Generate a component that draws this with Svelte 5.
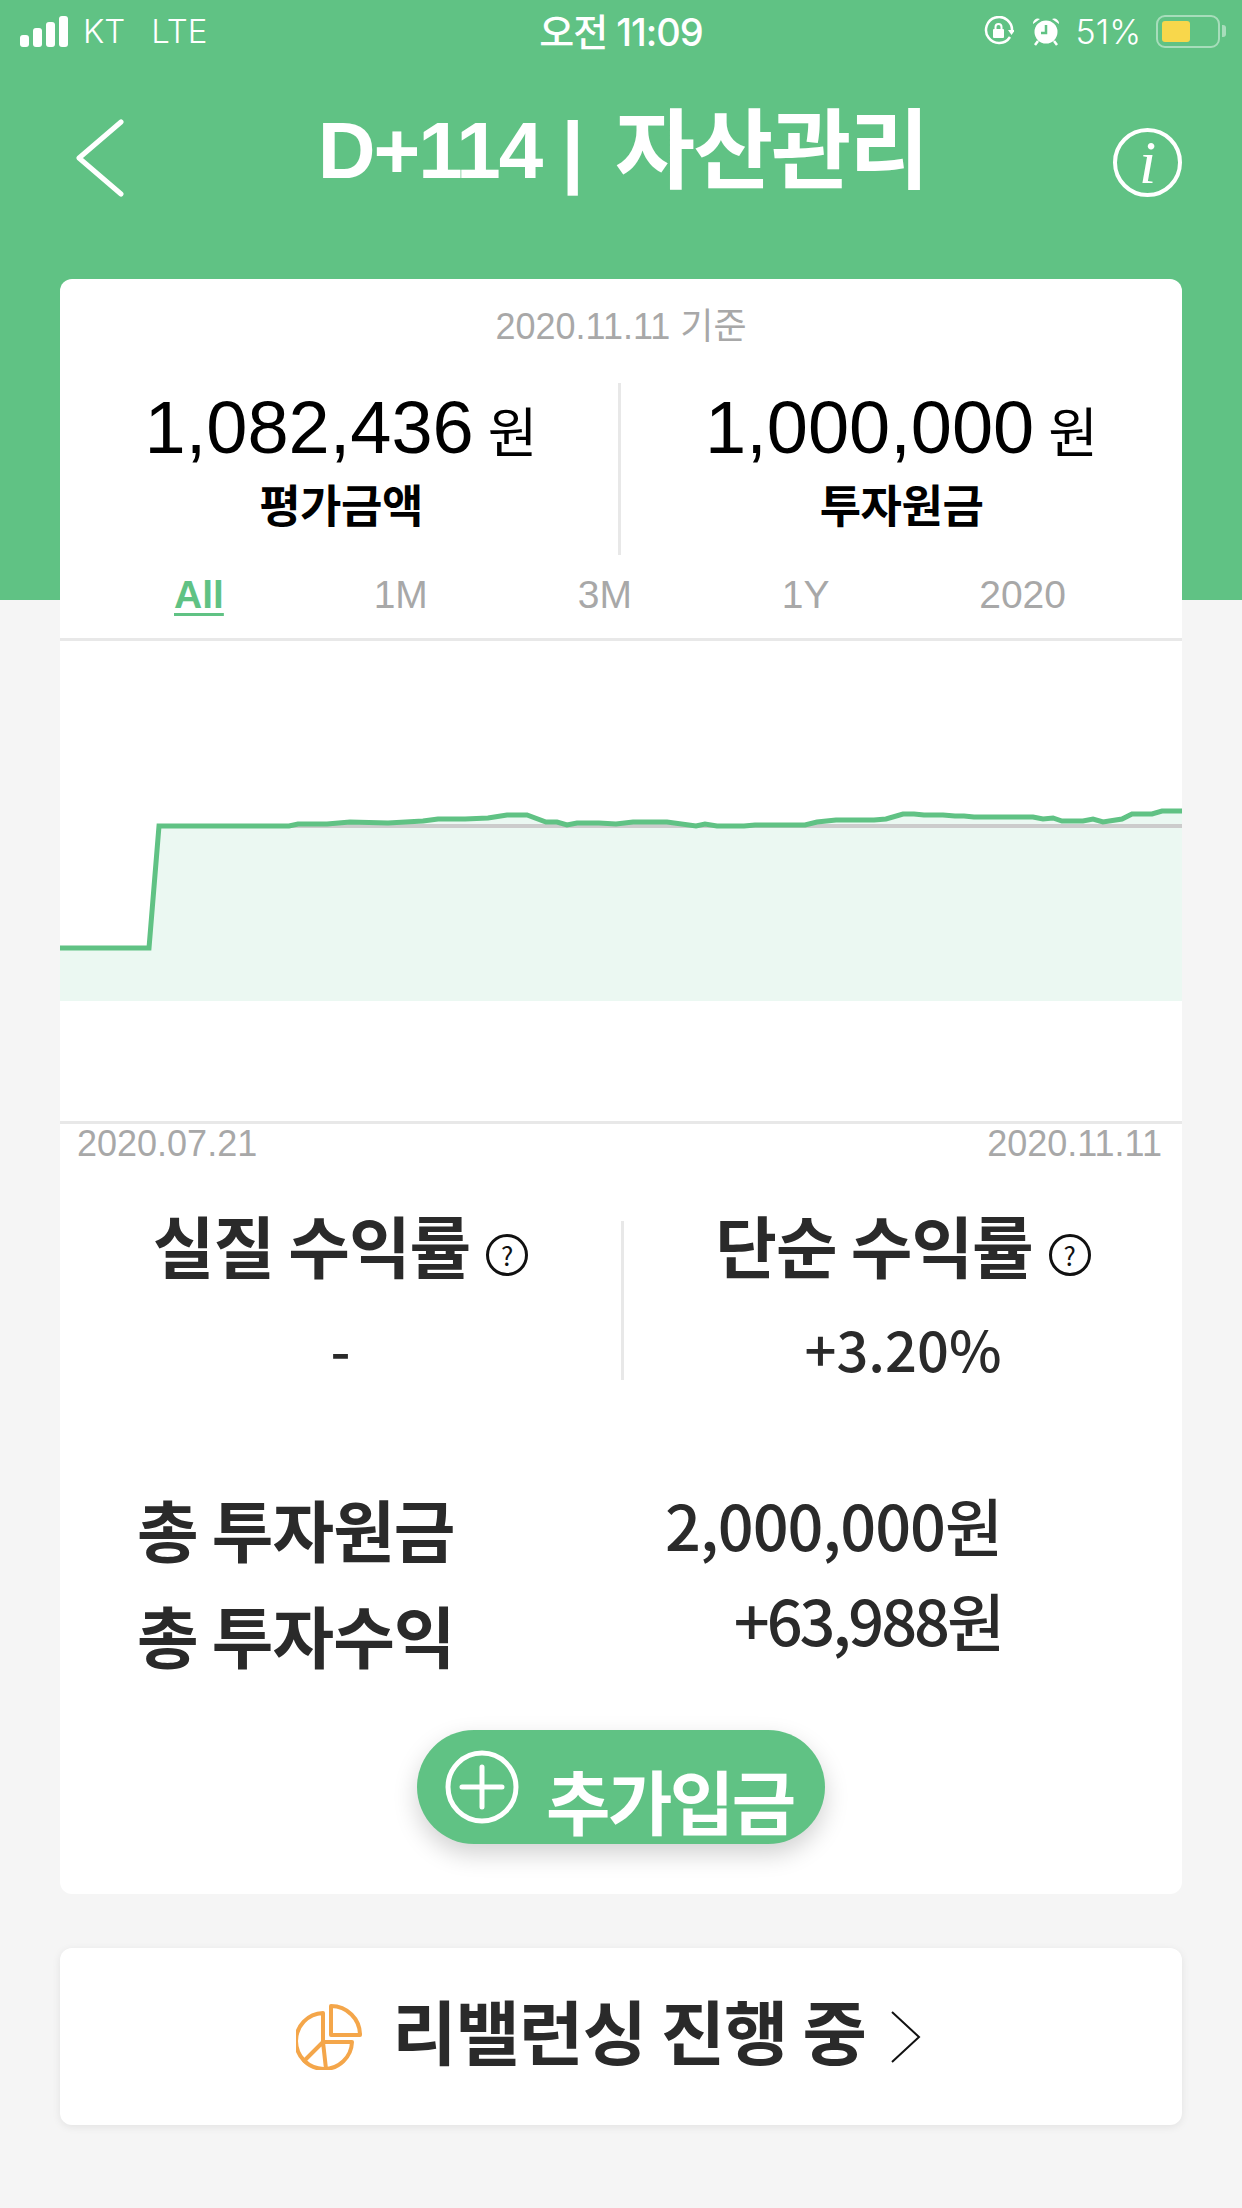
<script>
    const tabs = ["All", "1M", "3M", "1Y", "2020"];

    // chart points, px inside the 1122x480 chart box
    const points = [
        [0, 308], [89, 308], [99, 186], [229, 186], [238, 184], [267, 184], [290, 182], [328, 183],
        [363, 181], [378, 179], [405, 179], [428, 178], [447, 175], [467, 175], [486, 182], [497, 182],
        [507, 185], [517, 183], [539, 183], [556, 184], [573, 182], [607, 182], [636, 186], [645, 184],
        [657, 186], [684, 186], [695, 185], [745, 185], [757, 182], [776, 180], [814, 180], [826, 179],
        [843, 174], [854, 174], [864, 175], [883, 175], [895, 176], [904, 176], [914, 177], [973, 177],
        [983, 179], [993, 178], [1002, 181], [1023, 181], [1033, 179], [1043, 182], [1062, 179], [1072, 174],
        [1092, 174], [1102, 171], [1122, 171],
    ];
    const line = points.map((p) => p.join(",")).join(" ");
    const area = `0,361 ${line} 1122,361`;
</script>

<div class="page">
    <header class="top">
        <div class="status">
            <div class="status-left">
                <div class="signal">
                    <i style="height: 12px"></i>
                    <i style="height: 19px"></i>
                    <i style="height: 25px"></i>
                    <i style="height: 31px"></i>
                </div>
                <span class="carrier">KT</span>
                <span class="carrier">LTE</span>
            </div>
            <div class="clock">오전 11:09</div>
            <div class="status-right">
                <svg width="30" height="30" viewBox="0 0 30 30" fill="none" stroke="#fff" stroke-width="2.5">
                    <path d="M26 21A13 13 0 1 1 28 15" />
                    <path d="M24 14h7l-3.500 5z" fill="#fff" stroke="none" />
                    <rect x="9" y="13" width="11" height="9" rx="1" fill="#fff" stroke="none" />
                    <path d="M11.500 13v-2a3 3 0 0 1 6 0v2" stroke-width="2" />
                </svg>
                <svg class="alarm" width="28" height="30" viewBox="0 0 28 30" fill="none">
                    <circle cx="14" cy="16" r="11.500" fill="#fff" />
                    <path d="M14 9v8h-5" stroke="#60c284" stroke-width="2.500" />
                    <path d="M1 8a5 5 0 0 1 7-5zM27 8a5 5 0 0 0-7-5z" fill="#fff" />
                    <path d="M6 25l-3 4M22 25l3 4" stroke="#fff" stroke-width="2.500" />
                </svg>
                <span class="percent">51%</span>
                <div class="battery"><div class="battery-level"></div></div>
                <div class="battery-nub"></div>
            </div>
        </div>
        <nav class="nav">
            <svg class="back" width="48" height="78" viewBox="0 0 48 78" fill="none" stroke="#fff" stroke-width="5" stroke-linecap="round" stroke-linejoin="round">
                <path d="M45 3L3 39L45 75" />
            </svg>
            <h1>D+114 | <span class="title-ko">자산관리</span></h1>
            <div class="info"><span>i</span></div>
        </nav>
    </header>

    <main class="content">
        <section class="card summary-card">
            <div class="as-of">2020.11.11 기준</div>
            <div class="summary">
                <div class="summary-col first">
                    <div class="amount">1,082,436<span class="won">원</span></div>
                    <div class="amount-label">평가금액</div>
                </div>
                <div class="summary-col with-rule">
                    <div class="amount">1,000,000<span class="won">원</span></div>
                    <div class="amount-label">투자원금</div>
                </div>
            </div>
            <div class="tabs">
                {#each tabs as tab, i}
                    <span class="tab" class:active={i === 0}>{tab}</span>
                {/each}
            </div>
            <div class="chart">
                <svg width="1122" height="480" viewBox="0 1 1122 480">
                    <polygon points={area} fill="#ebf8f2" />
                    <rect x="99" y="184" width="1023" height="4" fill="#cccccc" />
                    <polyline points={line} fill="none" stroke="#60c284" stroke-width="5" />
                </svg>
            </div>
            <div class="chart-dates">
                <span>2020.07.21</span>
                <span>2020.11.11</span>
            </div>
            <div class="rates">
                <div class="rate-col">
                    <div class="rate-title">실질 수익률<span class="help">?</span></div>
                    <div class="rate-value">-</div>
                </div>
                <div class="rate-col with-rule">
                    <div class="rate-title">단순 수익률<span class="help">?</span></div>
                    <div class="rate-value">+3.20%</div>
                </div>
            </div>
            <div class="totals">
                <div class="total-labels">
                    <div>총 투자원금</div>
                    <div>총 투자수익</div>
                </div>
                <div class="total-values">
                    <div>2,000,000원</div>
                    <div class="tight">+63,988원</div>
                </div>
            </div>
            <button class="deposit">
                <svg width="74" height="74" viewBox="0 0 74 74" fill="none" stroke="#fff" stroke-width="5" stroke-linecap="round">
                    <circle cx="37" cy="37" r="34" />
                    <path d="M37 17v40M17 37h40" />
                </svg>
                <span>추가입금</span>
            </button>
        </section>

        <section class="card rebalance">
            <svg width="66" height="66" viewBox="0 0 66 66" fill="none" stroke="#f4a64a" stroke-width="4" stroke-linejoin="round">
                <path d="M35 2V31H64A29 29 0 0 0 35 2Z" />
                <path d="M27 9A28 28 0 1 0 56 38H27Z" />
                <path d="M27 38L30 65M27 38L7 58" />
            </svg>
            <span class="rebalance-text">리밸런싱 진행 중</span>
            <svg width="32" height="54" viewBox="0 0 32 54" fill="none" stroke="#111" stroke-width="2">
                <path d="M2 2L29 27L2 52" />
            </svg>
        </section>
    </main>
</div>

<style>
    :global(body) {
        margin: 0;
        background: #f5f5f5;
    }

    .page {
        width: 1242px;
        height: 2208px;
        overflow: hidden;
        background: #f5f5f5;
        font-family: "Noto Sans CJK KR", "Noto Sans", sans-serif;
    }

    .top {
        height: 600px;
        background: #60c284;
        color: #fff;
    }

    .status {
        height: 62px;
        display: grid;
        grid-template-columns: 1fr auto 1fr;
        align-items: center;
        font-family: Inter, "Noto Sans CJK KR", sans-serif;
        font-size: 33px;
    }

    .status-left {
        display: flex;
        align-items: center;
        padding-left: 20px;
    }

    .signal {
        display: flex;
        align-items: flex-end;
        gap: 4px;
        height: 31px;
        margin-right: 15px;
        padding-top: 1px;
    }

    .signal i {
        width: 9px;
        border-radius: 3px;
        background: #fff;
    }

    .carrier {
        margin-right: 26px;
        font-weight: 300;
    }

    .clock {
        margin-top: -3px;
        font-size: 38px;
        font-weight: 500;
        letter-spacing: -1px;
    }

    .status-right {
        display: flex;
        align-items: center;
        justify-content: flex-end;
        padding-right: 16px;
    }

    .alarm {
        margin-left: 18px;
    }

    .percent {
        margin-left: 16px;
        font-weight: 300;
        font-size: 34px;
    }

    .battery {
        box-sizing: border-box;
        width: 64px;
        height: 33px;
        margin-left: 15px;
        padding: 4px;
        border: 2px solid rgba(255, 255, 255, 0.45);
        border-radius: 9px;
    }

    .battery-level {
        width: 28px;
        height: 100%;
        border-radius: 3px;
        background: #f8d74b;
    }

    .battery-nub {
        width: 4px;
        height: 12px;
        margin-left: 2px;
        border-radius: 0 3px 3px 0;
        background: rgba(255, 255, 255, 0.45);
    }

    .nav {
        height: 186px;
        display: flex;
        align-items: center;
        justify-content: space-between;
        padding: 0 60px 0 76px;
    }

    .back {
        margin-top: 5px;
    }

    .nav h1 {
        margin: -22px 0 0 8px;
        font-family: "Liberation Sans", "Noto Sans CJK KR", sans-serif;
        font-size: 80px;
        font-weight: 700;
        letter-spacing: -2px;
        white-space: nowrap;
    }

    .title-ko {
        margin-left: 13px;
        font-size: 87px;
        vertical-align: -4px;
    }

    .info {
        box-sizing: border-box;
        width: 69px;
        height: 69px;
        margin-top: 14px;
        display: flex;
        align-items: center;
        justify-content: center;
        border: 4px solid #fff;
        border-radius: 50%;
        font-family: "Liberation Serif", serif;
        font-style: italic;
        font-size: 62px;
    }

    .content {
        margin-top: -321px;
        padding: 0 60px;
        display: flex;
        flex-direction: column;
        gap: 54px;
    }

    .card {
        background: #fff;
        border-radius: 12px;
    }

    .summary-card {
        height: 1615px;
        display: flex;
        flex-direction: column;
    }

    .as-of {
        height: 92px;
        padding-top: 2px;
        box-sizing: border-box;
        line-height: 92px;
        text-align: center;
        font-family: "Liberation Sans", "Noto Sans CJK KR", sans-serif;
        font-size: 36px;
        color: #a8a8a8;
    }

    .summary {
        display: grid;
        grid-template-columns: 558px 564px;
        height: 172px;
        margin-top: 12px;
    }

    .summary-col {
        text-align: center;
    }

    .summary-col.first {
        padding-left: 4px;
    }

    .with-rule {
        border-left: 3px solid #e8e8e8;
    }

    .amount {
        height: 90px;
        line-height: 90px;
        font-family: "Liberation Sans", "Noto Sans CJK KR", sans-serif;
        font-size: 74px;
        color: #000;
    }

    .won {
        margin-left: 14px;
        font-size: 54px;
        font-family: "Noto Sans CJK KR", sans-serif;
    }

    .amount-label {
        margin-top: 1px;
        line-height: 60px;
        font-size: 45px;
        font-weight: 700;
        letter-spacing: -0.5px;
        color: #000;
    }

    .tabs {
        box-sizing: border-box;
        height: 86px;
        display: flex;
        justify-content: space-between;
        padding: 0 116px 0 114px;
        border-bottom: 3px solid #e8e8e8;
        font-family: "Liberation Sans", sans-serif;
        font-size: 39px;
        line-height: 80px;
        color: #a8a8a8;
    }

    .tab.active {
        font-weight: 700;
        color: #60c284;
        text-decoration: underline;
        text-underline-offset: 5px;
    }

    .chart {
        height: 480px;
        border-bottom: 3px solid #e8e8e8;
    }

    .chart svg {
        display: block;
    }

    .chart-dates {
        display: flex;
        justify-content: space-between;
        padding: 0 20px 0 17px;
        line-height: 40px;
        font-family: "Liberation Sans", sans-serif;
        font-size: 36px;
        color: #a8a8a8;
    }

    .rates {
        display: grid;
        grid-template-columns: 1fr 1fr;
        height: 156px;
        margin-top: 57px;
    }

    .rate-col {
        text-align: center;
        color: #2a2a2a;
    }

    .rate-title {
        height: 62px;
        line-height: 46px;
        font-size: 67px;
        font-weight: 700;
        letter-spacing: -1px;
        white-space: nowrap;
    }

    .help {
        box-sizing: border-box;
        display: inline-flex;
        width: 42px;
        height: 42px;
        margin-left: 16px;
        align-items: center;
        justify-content: center;
        vertical-align: 7px;
        border: 3px solid #111;
        border-radius: 50%;
        font-size: 26px;
        font-weight: 400;
        letter-spacing: 0;
        line-height: 1;
        color: #111;
    }

    .rate-value {
        margin-top: 33px;
        line-height: 64px;
        font-size: 56px;
        font-weight: 500;
    }

    .totals {
        display: flex;
        justify-content: space-between;
        margin-top: 98px;
        padding: 0 180px 0 77px;
        color: #2a2a2a;
        white-space: nowrap;
    }

    .total-labels {
        line-height: 106px;
        font-size: 67px;
        font-weight: 700;
        letter-spacing: -1px;
    }

    .total-values {
        margin-top: 1px;
        line-height: 95px;
        font-size: 63px;
        font-weight: 500;
        text-align: right;
        letter-spacing: -1px;
    }

    .total-values .tight {
        letter-spacing: -3px;
    }

    .deposit {
        align-self: center;
        box-sizing: border-box;
        width: 408px;
        height: 114px;
        margin-top: 43px;
        padding: 0 0 0 28px;
        display: flex;
        align-items: center;
        border: 0;
        border-radius: 57px;
        background: #60c284;
        box-shadow: 0 10px 24px rgba(0, 0, 0, 0.18);
        color: #fff;
        font-family: inherit;
        font-size: 70px;
        font-weight: 700;
        letter-spacing: -2.500px;
    }

    .deposit span {
        margin: 26px 0 0 27px;
        line-height: 80px;
        white-space: nowrap;
    }

    .rebalance {
        box-sizing: border-box;
        height: 177px;
        padding-right: 24px;
        display: flex;
        align-items: center;
        justify-content: center;
        box-shadow: 0 2px 8px rgba(0, 0, 0, 0.08);
    }

    .rebalance-text {
        margin: -15px 24px 0 30px;
        font-size: 70px;
        font-weight: 700;
        letter-spacing: -1px;
        color: #2a2a2a;
        white-space: nowrap;
    }
</style>
